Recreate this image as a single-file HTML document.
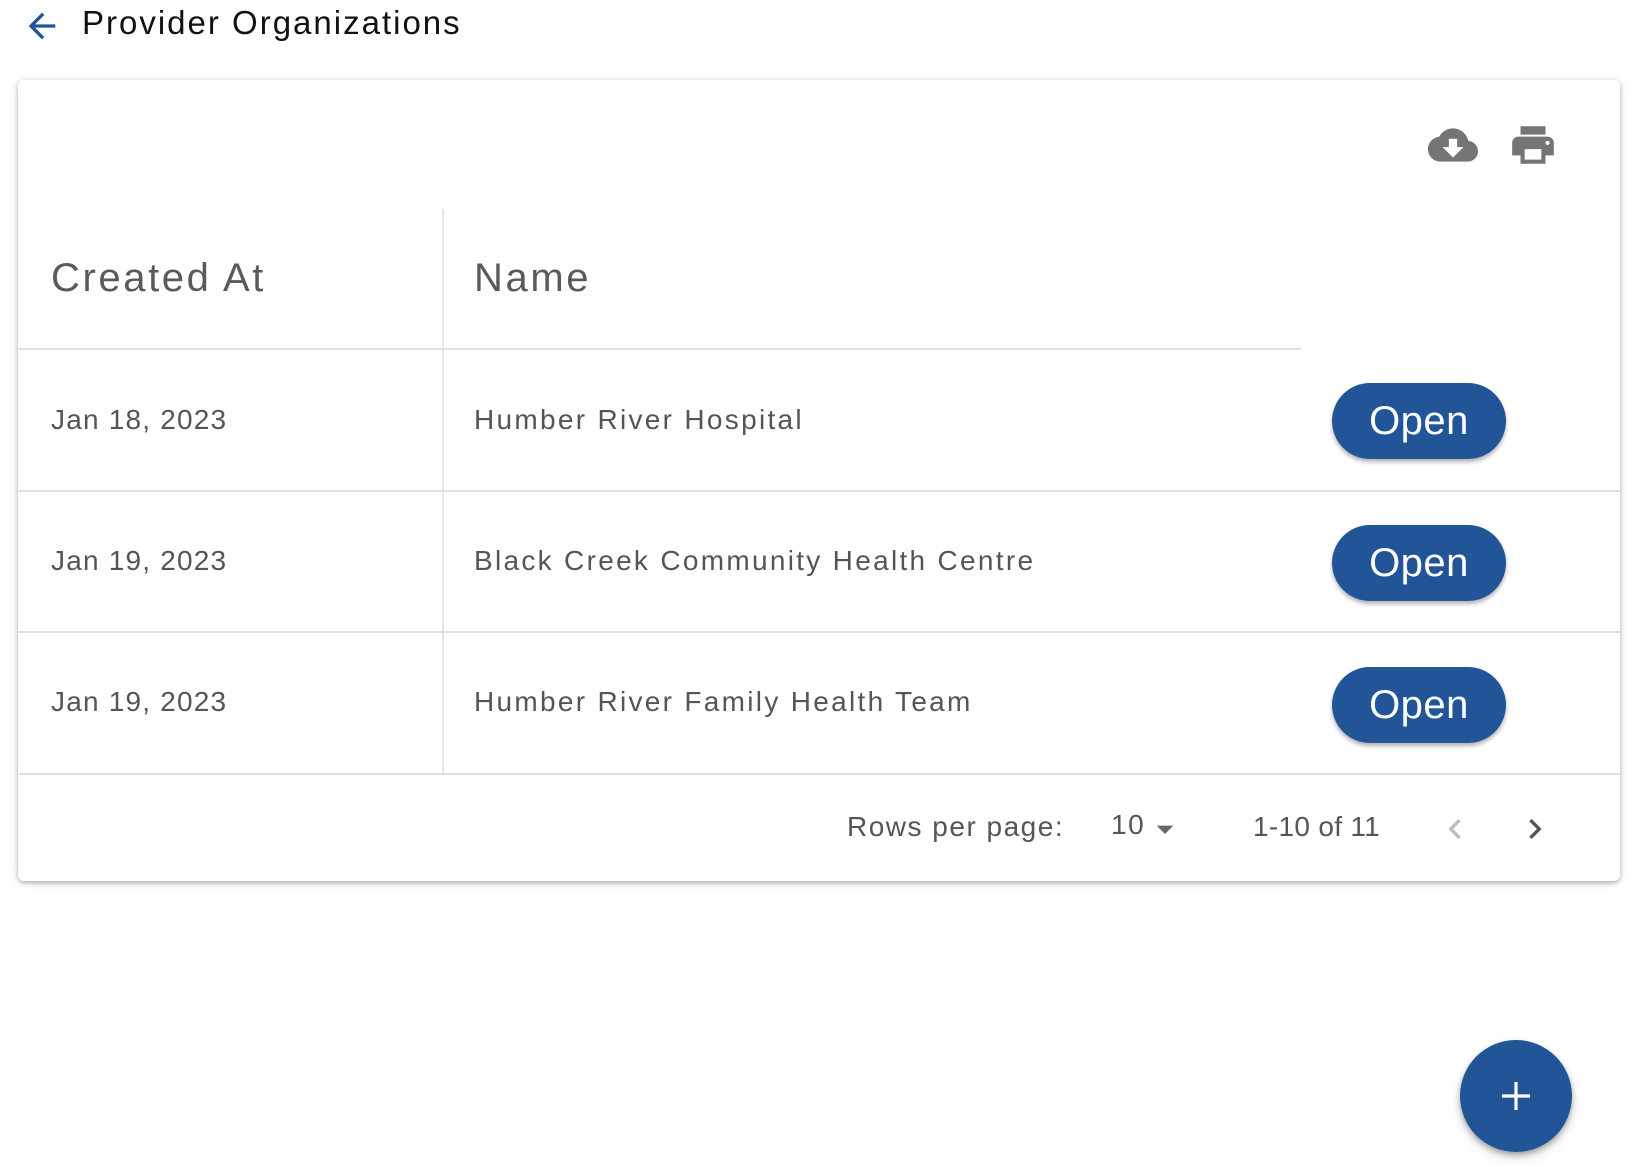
<!DOCTYPE html>
<html><head><meta charset="utf-8"><style>
*{margin:0;padding:0;box-sizing:border-box}
body{width:1648px;height:1168px;background:#fff;font-family:"Liberation Sans",sans-serif;position:relative;overflow:hidden}
.abs{position:absolute}
.title{left:82px;top:4px;font-size:33px;color:#111;letter-spacing:2px;white-space:nowrap}
.card{left:18px;top:80px;width:1602px;height:801px;background:#fff;border-radius:6px;box-shadow:0 2px 4px rgba(0,0,0,.25),0 1px 10px rgba(0,0,0,.12)}
.hl{height:2px;background:#e0e0e0}
.vl{width:2px;background:#e6e6e6}
.th{font-size:40px;color:#5a5a5a;letter-spacing:2.6px;white-space:nowrap}
.td{font-size:28px;color:#555;letter-spacing:2.3px;white-space:nowrap}
.dt{letter-spacing:1.2px}
.btn{width:174px;height:76px;border-radius:38px;background:#215597;color:#fff;font-size:40px;text-align:center;line-height:76px;letter-spacing:0.5px;box-shadow:0 3px 4px rgba(0,0,0,.3)}
.ft{font-size:28px;color:#555;letter-spacing:1.5px;white-space:nowrap}
</style></head><body>
<svg class="abs" style="left:22px;top:6px" width="40" height="40" viewBox="0 0 24 24"><path d="M20 11H7.83l5.59-5.59L12 4l-8 8 8 8 1.41-1.41L7.83 13H20v-2z" fill="#215597"/></svg>
<div class="abs title">Provider Organizations</div>
<div class="abs card"></div>
<svg class="abs" style="left:1428px;top:120px" width="50" height="50" viewBox="0 0 24 24"><path fill="#757575" d="M19.35 10.04C18.67 6.59 15.640 4 12 4 9.11 4 6.6 5.64 5.35 8.04 2.34 8.36 0 10.91 0 14c0 3.31 2.69 6 6 6h13c2.76 0 5-2.24 5-5 0-2.64-2.05-4.78-4.650-4.96zM17 13l-5 5-5-5h3V9h4v4h3z"/></svg>
<svg class="abs" style="left:1508px;top:120px" width="50" height="50" viewBox="0 0 24 24"><path fill="#757575" d="M19 8H5c-1.66 0-3 1.34-3 3v6h4v4h12v-4h4v-6c0-1.66-1.34-3-3-3zm-3 11H8v-5h8v5zm3-7c-.55 0-1-.45-1-1s.45-1 1-1 1 .45 1 1-.45 1-1 1zm-1-9H6v4h12V3z"/></svg>
<div class="abs vl" style="left:442px;top:209px;height:565px"></div>
<div class="abs hl" style="left:18px;top:348px;width:1283px"></div>
<div class="abs th" style="left:51px;top:256px">Created At</div>
<div class="abs th" style="left:474px;top:256px">Name</div>

<div class="abs td dt" style="left:51px;top:404px">Jan 18, 2023</div>
<div class="abs td" style="left:474px;top:404px">Humber River Hospital</div>
<div class="abs btn" style="left:1332px;top:383px">Open</div>
<div class="abs hl" style="left:18px;top:490px;width:1602px"></div>

<div class="abs td dt" style="left:51px;top:545px">Jan 19, 2023</div>
<div class="abs td" style="left:474px;top:545px">Black Creek Community Health Centre</div>
<div class="abs btn" style="left:1332px;top:525px">Open</div>
<div class="abs hl" style="left:18px;top:631px;width:1602px"></div>

<div class="abs td dt" style="left:51px;top:686px">Jan 19, 2023</div>
<div class="abs td" style="left:474px;top:686px">Humber River Family Health Team</div>
<div class="abs btn" style="left:1332px;top:667px">Open</div>
<div class="abs hl" style="left:18px;top:773px;width:1602px"></div>

<div class="abs ft" style="left:847px;top:811px">Rows per page:</div>
<div class="abs ft" style="left:1111px;top:809px">10</div>
<svg class="abs" style="left:1145px;top:809px" width="40" height="40" viewBox="0 0 24 24"><path d="M7 10l5 5 5-5z" fill="#666"/></svg>
<div class="abs ft" style="left:1253px;top:811px;letter-spacing:0.3px">1-10 of 11</div>
<svg class="abs" style="left:1435px;top:809px" width="40" height="40" viewBox="0 0 24 24"><path d="M15.41 7.41L14 6l-6 6 6 6 1.41-1.41L10.83 12z" fill="#bdbdbd"/></svg>
<svg class="abs" style="left:1515px;top:809px" width="40" height="40" viewBox="0 0 24 24"><path d="M10 6L8.59 7.410 13.17 12l-4.58 4.59L10 18l6-6z" fill="#555"/></svg>

<div class="abs" style="left:1460px;top:1040px;width:112px;height:112px;border-radius:50%;background:#215597;box-shadow:0 3px 6px rgba(0,0,0,.3),0 6px 12px rgba(0,0,0,.12)"></div>
<svg class="abs" style="left:1492px;top:1072px" width="48" height="48" viewBox="0 0 24 24"><path d="M12 5v14M5 12h14" stroke="#fff" stroke-width="1.6"/></svg>
</body></html>
